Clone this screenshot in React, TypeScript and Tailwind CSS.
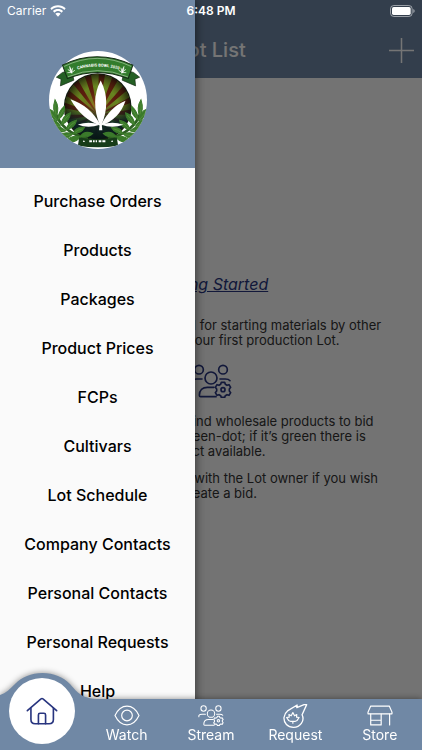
import React from 'react';

const menuItems = [
    'Purchase Orders',
    'Products',
    'Packages',
    'Product Prices',
    'FCPs',
    'Cultivars',
    'Lot Schedule',
    'Company Contacts',
    'Personal Contacts',
    'Personal Requests',
    'Help',
];

/* ICONS */
const PeopleGearIcon = ({ className }: { className?: string }) => (
    <svg viewBox="0 0 126 102" fill="none" stroke="currentColor" strokeWidth="5" strokeLinecap="round" strokeLinejoin="round" className={className} aria-hidden="true">
        <circle cx="27" cy="17" r="13" />
        <circle cx="99" cy="17" r="13" />
        <circle cx="63" cy="42" r="18" />
        <path d="M36 45H20Q8 45 4 51V57" />
        <path d="M90 45h16q10 0 14 5" />
        <path d="M78 98H32q-4 0-4-4c0-15 10-24 24-24h20" />
        <path d="M94 55h10l2 6 5 3 6-2 5 8-4 5v6l4 5-5 8-6-2-5 3-2 5H94l-2-5-5-3-6 2-5-8 4-5v-6l-4-5 5-8 6 2 5-3z" />
        <circle cx="99" cy="77" r="6" />
    </svg>
);

const HomeIcon = () => (
    <svg viewBox="78 96 98 86" fill="none" stroke="currentColor" strokeWidth="5" strokeLinecap="round" strokeLinejoin="round" className="w-8 h-7" aria-hidden="true">
        <path d="M82 138l42-36q3-3 6 0l42 36" />
        <path d="M93 131v34q0 13 13 13h43q13 0 13-13v-34" />
        <path d="M116 178v-27q0-5 5-5h12q5 0 5 5v27" />
    </svg>
);

const EyeIcon = () => (
    <svg viewBox="0 0 78 62" fill="none" stroke="currentColor" strokeWidth="3.5" strokeLinejoin="round" className="w-[26px] h-[21px]" aria-hidden="true">
        <path d="M3 31C12 12 25 3 39 3s27 9 36 28C66 50 53 59 39 59S12 50 3 31z" />
        <circle cx="39" cy="31" r="16" />
    </svg>
);

const CometIcon = () => (
    <svg viewBox="276 35 80 76" fill="none" stroke="currentColor" strokeWidth="4" strokeLinejoin="round" className="w-[27px] h-[25px]" aria-hidden="true">
        <path d="M350 40l-14 31c9 19-6 38-26 38-18 0-30-13-29-30 1-9 5-15 12-21l28-17-1 8 22-9z" />
        <path d="M308 64l5 10 7-4-1 8 8 1-6 9-7 3h-12l-7-3-6-9 8-1-1-8 7 4zM308 91v7" strokeWidth="3.5" />
    </svg>
);

const StoreIcon = () => (
    <svg viewBox="531 43 77 62" fill="none" stroke="currentColor" strokeWidth="3.5" strokeLinejoin="round" strokeLinecap="round" className="w-[26px] h-[21px]" aria-hidden="true">
        <path d="M542 46h55l8 18v5h-71v-5z" />
        <path d="M542 70v32h31V70M542 88h31M598 70v32" />
    </svg>
);

const WifiIcon = () => (
    <svg viewBox="0 0 48 34" fill="currentColor" className="w-4 h-3" aria-hidden="true">
        <path d="M24 0C15 0 7 4 1 9l4 5c5-5 12-8 19-8s14 3 19 8l4-5C41 4 33 0 24 0z" />
        <path d="M24 11c-6 0-11 2-15 6l4 5c3-3 7-5 11-5s8 2 11 5l4-5c-4-4-9-6-15-6z" />
        <path d="M24 22c-3 0-6 1-8 3l8 9 8-9c-2-2-5-3-8-3z" />
    </svg>
);

const BatteryIcon = () => (
    <svg viewBox="0 0 75 36" className="w-[25px] h-3" aria-hidden="true">
        <rect x="1.5" y="1.5" width="65" height="33" rx="10" fill="none" stroke="#fff" strokeOpacity=".5" strokeWidth="3" />
        <rect x="6" y="6" width="56" height="24" rx="5" fill="#fff" />
        <path d="M70 12q4 2 4 6t-4 6z" fill="#fff" fillOpacity=".55" />
    </svg>
);

/* Rays fan out from the middle of the badge */
const rays = Array.from({ length: 18 }, (_, i) => {
    const a = (i * 20 * Math.PI) / 180;
    const b = ((i * 20 + 11) * Math.PI) / 180;
    return `M172 210L${172 + 180 * Math.cos(a)} ${210 + 180 * Math.sin(a)}L${172 + 180 * Math.cos(b)} ${210 + 180 * Math.sin(b)}z`;
}).join('');

const Laurel = () => (
    <g>
        <path d="M44 200Q62 262 142 282" fill="none" stroke="#2d5f22" strokeWidth="8" />
        <g fill="#3b7a2b" stroke="#3b7a2b" strokeWidth="3">
            <path d="M48 214Q34 196 44 165Q58 188 48 214z" />
            <path d="M50 228Q30 220 24 192Q48 200 50 228z" />
            <path d="M52 226Q52 202 72 184Q76 208 52 226z" />
            <path d="M60 244Q34 246 22 222Q48 222 60 244z" />
            <path d="M62 240Q66 212 90 204Q88 230 62 240z" />
            <path d="M76 258Q48 270 34 248Q58 240 76 258z" />
            <path d="M78 254Q82 230 108 226Q104 248 78 254z" />
            <path d="M96 268Q76 290 52 272Q74 258 96 268z" />
            <path d="M98 266Q106 244 132 248Q122 266 98 266z" />
            <path d="M120 276Q102 298 78 286Q96 270 120 276z" />
            <path d="M120 274Q132 256 156 266Q142 280 120 274z" />
        </g>
        <g fill="none" stroke="#69a046" strokeWidth="1.5">
            <path d="M47 209Q42 192 44 176M48 224Q38 214 30 202M55 222Q60 208 69 195M56 242Q42 236 32 228M66 236Q74 220 85 211M70 257Q56 256 44 252M82 250Q92 238 103 232M90 269Q76 274 62 273M104 262Q114 254 126 252" />
        </g>
    </g>
);

const BannerLeaf = () => (
    <path d="M0 8L-2-2 0-12 2-2zM0 8L-8-5-1 3zM0 8L8-5 1 3zM0 8L-12 4-3 6zM0 8L12 4 3 6zM0 6v6" fill="#fff" stroke="#fff" strokeWidth="1" />
);

const Logo = () => (
    <svg viewBox="26 20 292 292" className="w-[98px] h-[98px]" role="img" aria-label="Cannabis Bowl 2020">
        <defs>
            <clipPath id="badge"><circle cx="172" cy="166" r="146" /></clipPath>
            <clipPath id="disc"><circle cx="171" cy="187" r="97" /></clipPath>
            <radialGradient id="shade" gradientUnits="userSpaceOnUse" cx="171" cy="185" r="99">
                <stop offset="0" stopColor="#c46d24" stopOpacity=".6" />
                <stop offset=".6" stopColor="#4a2a0c" stopOpacity=".1" />
                <stop offset="1" stopColor="#050805" stopOpacity=".75" />
            </radialGradient>
            <linearGradient id="ground" x1="0" y1="0" x2="0" y2="1">
                <stop offset="0" stopColor="#0d2422" stopOpacity="0" />
                <stop offset=".5" stopColor="#0a2426" stopOpacity=".9" />
                <stop offset="1" stopColor="#071412" />
            </linearGradient>
            <path id="arc" d="M96 80Q170 52 250 80" />
        </defs>
        <g clipPath="url(#badge)">
            <rect x="26" y="20" width="292" height="292" fill="#fff" />
            <circle cx="171" cy="187" r="101" fill="#111a10" />
            <g clipPath="url(#disc)">
                <rect x="70" y="80" width="204" height="210" fill="#5b1a0d" />
                <path d={rays} fill="#6a8f22" />
                <rect x="70" y="80" width="204" height="210" fill="url(#shade)" />
                <rect x="70" y="180" width="204" height="110" fill="url(#ground)" />
            </g>
            <Laurel />
            <g transform="translate(344 0) scale(-1 1)"><Laurel /></g>
            {/* White leaf */}
            <g fill="#fff">
                <path d="M178 242Q148 170 180 108Q212 170 182 242z" />
                <path d="M178 242Q122 222 90 164Q150 184 180 242z" />
                <path d="M180 242Q208 186 254 168Q236 222 182 242z" />
                <path d="M178 240Q140 252 112 239Q146 228 178 240z" />
                <path d="M182 240Q214 228 248 240Q214 252 182 240z" />
                <path d="M177 238h6l2 18h-10z" />
            </g>
            <path d="M116 278Q172 288 228 278L232 302Q172 312 112 302z" fill="#173c19" />
            <path d="M146 289h8m3 0h5m3 0h4m5 0h8m3 0h9" stroke="#fff" strokeWidth="6" />
            <path d="M127 291l3-6 3 6zM211 291l3-6 3 6z" fill="#fff" />
        </g>
        {/* Banner */}
        <path d="M66 84L48 98l14 6-2 20 40-17-6-31zM278 84l18 14-14 6 2 20-40-17 6-31z" fill="#245f24" stroke="#172c17" strokeWidth="2" />
        <path d="M66 62Q168 12 276 62L262 102Q170 66 81 102z" fill="#327c2c" stroke="#162b16" strokeWidth="3" />
        <path d="M71 66Q168 18 271 66M82 97Q170 60 261 97" fill="none" stroke="#d6e6cf" strokeWidth="1.5" />
        <text fill="#fff" fontFamily="Roboto, sans-serif" fontSize="12" fontWeight="700" textAnchor="middle">
            <textPath href="#arc" startOffset="50%">CANNABIS BOWL 2020</textPath>
        </text>
        <g transform="translate(91 77) rotate(-18)"><BannerLeaf /></g>
        <g transform="translate(246 77) rotate(18)"><BannerLeaf /></g>
    </svg>
);

const tabs = [
    { label: 'Watch', icon: <EyeIcon /> },
    { label: 'Stream', icon: <PeopleGearIcon className="w-[26px] h-[21px]" /> },
    { label: 'Request', icon: <CometIcon /> },
    { label: 'Store', icon: <StoreIcon /> },
];

const LotListPage = () => (
    <div className="h-full flex flex-col bg-[#fafafa]">
        <header className="bg-[#7088a5] pt-[22px] shrink-0">
            <div className="relative h-14 flex items-center justify-center">
                <h1 className="text-xl font-medium text-white">Lot List</h1>
                <button aria-label="Add lot" className="absolute right-2 text-white">
                    <svg viewBox="0 0 25 25" stroke="currentColor" strokeWidth="1.5" className="w-[25px] h-[25px]">
                        <path d="M12.5 0v25M0 12.5h25" />
                    </svg>
                </button>
            </div>
        </header>

        <main className="flex-1 flex flex-col items-center pt-[196px] px-4 text-center text-[13px] leading-[15px] text-[#333]">
            <a href="#start" className="text-base leading-5 italic underline text-[#28357f]">Getting Started</a>
            <p className="mt-6">
                Watch Lots that are listed for starting materials by other<br />
                growers, or start your first production Lot.
            </p>
            <PeopleGearIcon className="w-[42px] h-[34px] mt-4 shrink-0 text-[#28357f]" />
            <p className="mt-4">
                Search the Streams to find wholesale products to bid<br />
                on. Look out for the green-dot; if it’s green there is<br />
                product available.
            </p>
            <p className="mt-3">
                Use the chat to connect with the Lot owner if you wish<br />
                to create a bid.
            </p>
        </main>
    </div>
);

const Drawer = () => (
    <aside className="absolute inset-y-0 left-0 w-[195px] flex flex-col bg-[#fafafa] shadow-[0_0_10px_rgba(0,0,0,0.6)] overflow-hidden">
        <div className="bg-[#7088a5] h-[168px] shrink-0 flex justify-center pt-[51px]">
            <Logo />
        </div>
        <nav className="pt-2">
            <ul>
                {menuItems.map((item) => (
                    <li key={item}>
                        <a href="#menu" className="h-[49px] flex items-center justify-center text-base font-medium text-black">{item}</a>
                    </li>
                ))}
            </ul>
        </nav>
    </aside>
);

const StatusBar = () => (
    <div className="absolute inset-x-0 top-0 h-[22px] px-[7px] grid grid-cols-3 items-center text-white text-xs">
        <div className="flex items-center gap-1">
            <span>Carrier</span>
            <WifiIcon />
        </div>
        <span className="text-center font-semibold">6:48 PM</span>
        <div className="flex justify-end"><BatteryIcon /></div>
    </div>
);

const TabBar = () => (
    <nav className="absolute inset-x-0 bottom-0 drop-shadow-[0_0_3px_rgba(0,0,0,0.45)]">
        {/* Bump that rises around the active tab */}
        <svg viewBox="0 0 100 28" className="absolute bottom-full left-0 w-[100px] h-7 -mb-px" aria-hidden="true">
            <path d="M0 28V23C6 21 10 17 15 12C22 5 31 1 42.5 1S63 5 70 12C78 21 82 27 100 27v1z" fill="#7088a5" />
        </svg>
        <div className="grid grid-cols-5 h-[51px] bg-[#7088a5] text-white">
            <div className="relative">
                <button aria-label="Home" className="absolute left-1/2 -translate-x-1/2 bottom-[6px] size-[66px] rounded-full bg-white text-[#28357f] flex items-center justify-center">
                    <HomeIcon />
                </button>
            </div>
            {tabs.map((tab) => (
                <button key={tab.label} className="flex flex-col items-center pt-1 text-sm leading-4">
                    <span className="h-6 flex items-center">{tab.icon}</span>
                    <span>{tab.label}</span>
                </button>
            ))}
        </div>
    </nav>
);

export default function App() {
    return (
        <div className="relative h-screen overflow-hidden font-['Inter',sans-serif]">
            <LotListPage />
            <div className="absolute inset-0 bg-black/54" />
            <Drawer />
            <TabBar />
            <StatusBar />
        </div>
    );
}
